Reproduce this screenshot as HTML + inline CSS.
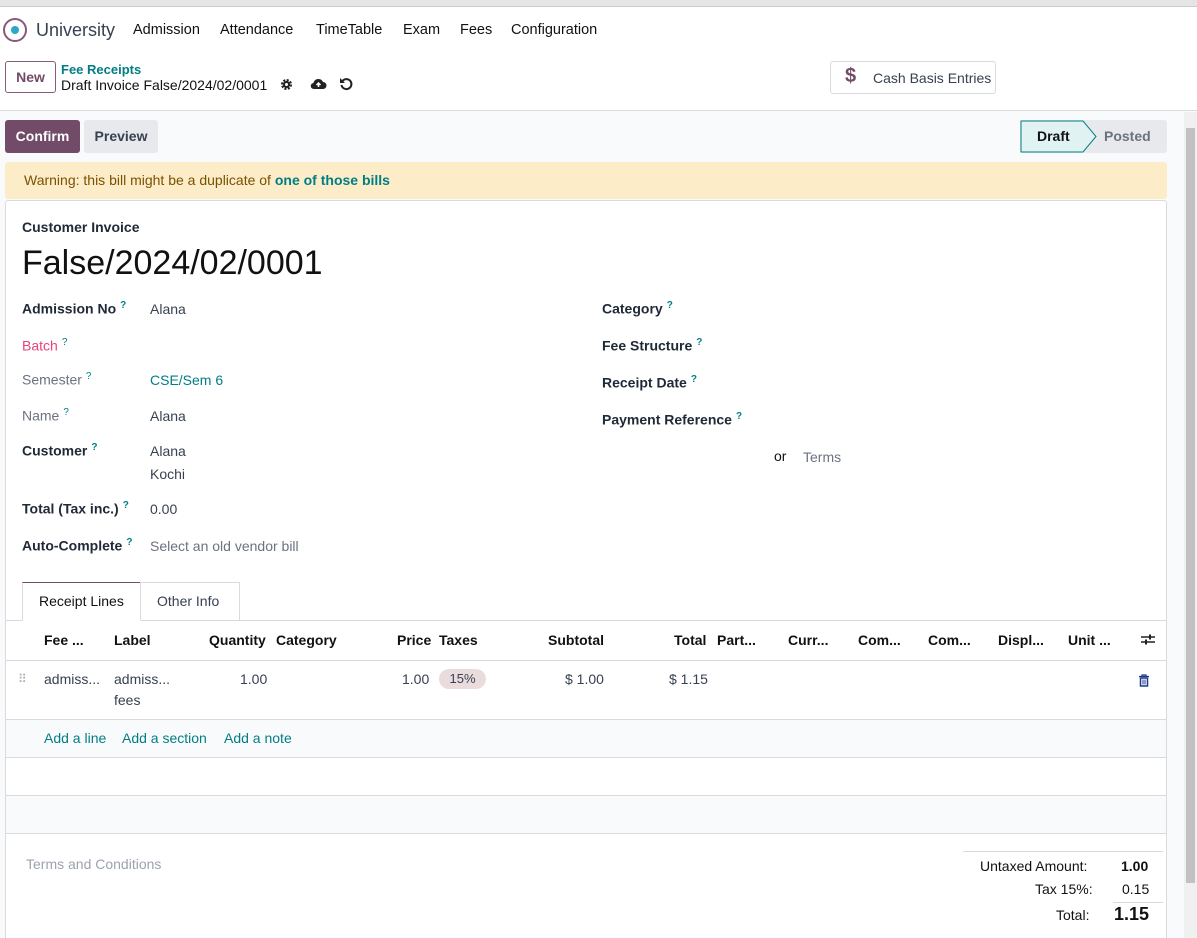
<!DOCTYPE html>
<html style="overflow:hidden;height:938px"><head><meta charset="utf-8"><style>
*{box-sizing:border-box;margin:0;padding:0}
body{width:1197px;height:938px;overflow:hidden;font-family:"Liberation Sans",sans-serif;font-size:14px;color:#374151;background:#f9fafb;position:relative}
.a{position:absolute;white-space:nowrap}
.teal{color:#017e84}
sup{color:#017e84;font-size:10px;margin-left:4px}
.lbl{font-weight:bold;color:#1f2937}
</style></head><body>
<div class="a" style="left:0;top:0;width:1197px;height:7px;background:#e5e5e5;border-bottom:1px solid #ccc"></div>
<div class="a" style="left:0;top:7px;width:1197px;height:104px;background:#fff;border-bottom:1px solid #d8dadd"></div>
<div class="a" style="left:3px;top:18px;width:24px;height:24px;border:2px solid #875a7b;border-radius:50%"><div style="margin:6px auto;width:8px;height:8px;border-radius:50%;background:#2aa7c9"></div></div>
<div class="a" style="left:36px;top:20px;font-size:18px;color:#374151">University</div>
<div class="a" style="left:133px;top:22px;font-size:14.5px;color:#111">Admission</div>
<div class="a" style="left:220px;top:22px;font-size:14.5px;color:#111">Attendance</div>
<div class="a" style="left:316px;top:22px;font-size:14.5px;color:#111">TimeTable</div>
<div class="a" style="left:403px;top:22px;font-size:14.5px;color:#111">Exam</div>
<div class="a" style="left:460px;top:22px;font-size:14.5px;color:#111">Fees</div>
<div class="a" style="left:511px;top:22px;font-size:14.5px;color:#111">Configuration</div>
<div class="a" style="left:5px;top:61px;width:51px;height:32px;border:1px solid #875a7b;border-radius:3px;color:#714b67;font-weight:bold;text-align:center;line-height:30px">New</div>
<div class="a teal" style="left:61px;top:62px;font-size:13px;font-weight:bold">Fee Receipts</div>
<div class="a" style="left:61px;top:77px;font-size:14px;color:#111">Draft Invoice False/2024/02/0001</div>
<svg class="a" style="left:280px;top:78px" width="13" height="13" viewBox="0 0 13 13"><circle cx="6.5" cy="6.5" r="4.2" fill="none" stroke="#222" stroke-width="2.6" stroke-dasharray="2 1.3"/><circle cx="6.5" cy="6.5" r="3.5" fill="#222"/><circle cx="6.5" cy="6.5" r="1.5" fill="#fff"/></svg>
<svg class="a" style="left:310px;top:77px" width="17" height="13" viewBox="0 0 17 13"><path d="M4 12H13A3.5 3.5 0 0 0 13 5A5 5 0 0 0 3.5 6A3 3 0 0 0 4 12Z" fill="#222"/><path d="M8.5 10V6M6.5 8L8.5 6L10.5 8" stroke="#fff" stroke-width="1.5" fill="none"/></svg>
<svg class="a" style="left:339px;top:77px" width="14" height="14" viewBox="0 0 14 14"><path d="M3.5 4A5 5 0 1 1 2.5 8" fill="none" stroke="#222" stroke-width="2"/><path d="M1 1V6H6Z" fill="#222"/></svg>
<div class="a" style="left:830px;top:61px;width:166px;height:33px;border:1px solid #d8dadd;border-radius:3px;background:#fff"><span style="position:absolute;left:14px;top:3px;font-size:20px;font-weight:bold;color:#714b67">$</span><span style="position:absolute;left:42px;top:8px;color:#374151">Cash Basis Entries</span></div>
<div class="a" style="left:5px;top:120px;width:75px;height:33px;background:#714b67;border-radius:3px;color:#fff;font-weight:bold;text-align:center;line-height:33px">Confirm</div>
<div class="a" style="left:84px;top:120px;width:74px;height:33px;background:#e7e9ed;border-radius:3px;color:#374151;font-weight:bold;text-align:center;line-height:33px">Preview</div>
<div class="a" style="left:1020px;top:120px;width:147px;height:33px;background:#e7e9ed;border-radius:3px"></div>
<svg class="a" style="left:1020px;top:120px" width="80" height="33"><path d="M1 1H63L76 16.5L63 32H1Z" fill="#e0f2f1" stroke="#017e84"/></svg>
<div class="a" style="left:1037px;top:128px;font-weight:bold;color:#111">Draft</div>
<div class="a" style="left:1104px;top:128px;font-weight:bold;color:#6b7280">Posted</div>
<div class="a" style="left:1184px;top:112px;width:13px;height:826px;background:#f0f0f0"></div>
<div class="a" style="left:1186px;top:128px;width:9px;height:755px;background:#c1c1c1"></div>
<div class="a" style="left:5px;top:162px;width:1162px;height:37px;background:#fdecc8;border-radius:3px"></div>
<div class="a" style="left:24px;top:172px;color:#7a5100">Warning: this bill might be a duplicate of <span class="teal" style="font-weight:bold">one of those bills</span></div>
<div class="a" style="left:5px;top:200px;width:1162px;height:738px;background:#fff;border:1px solid #d8dadd;border-bottom:none;border-radius:3px 3px 0 0"></div>
<div class="a lbl" style="left:22px;top:219px">Customer Invoice</div>
<div class="a" style="left:22px;top:244px;font-size:34px;color:#111">False/2024/02/0001</div>
<div class="a lbl" style="left:22px;top:300px">Admission No<sup>?</sup></div><div class="a" style="left:150px;top:301px">Alana</div>
<div class="a" style="left:22px;top:337px;color:#e9437a">Batch<sup>?</sup></div>
<div class="a" style="left:22px;top:371px;color:#6b7280">Semester<sup>?</sup></div><div class="a teal" style="left:150px;top:372px">CSE/Sem 6</div>
<div class="a" style="left:22px;top:407px;color:#6b7280">Name<sup>?</sup></div><div class="a" style="left:150px;top:408px">Alana</div>
<div class="a lbl" style="left:22px;top:442px">Customer<sup>?</sup></div><div class="a" style="left:150px;top:440px;line-height:23px">Alana<br>Kochi</div>
<div class="a lbl" style="left:22px;top:500px">Total (Tax inc.)<sup>?</sup></div><div class="a" style="left:150px;top:501px">0.00</div>
<div class="a lbl" style="left:22px;top:537px">Auto-Complete<sup>?</sup></div><div class="a" style="left:150px;top:538px;color:#6b7280">Select an old vendor bill</div>
<div class="a lbl" style="left:602px;top:300px">Category<sup>?</sup></div>
<div class="a lbl" style="left:602px;top:337px">Fee Structure<sup>?</sup></div>
<div class="a lbl" style="left:602px;top:374px">Receipt Date<sup>?</sup></div>
<div class="a lbl" style="left:602px;top:411px">Payment Reference<sup>?</sup></div>
<div class="a" style="left:774px;top:448px;color:#111">or</div><div class="a" style="left:803px;top:449px;color:#6b7280">Terms</div>
<div class="a" style="left:6px;top:620px;width:1160px;border-top:1px solid #d8dadd"></div>
<div class="a" style="left:22px;top:582px;width:119px;height:39px;background:#fff;border:1px solid #d8dadd;border-bottom:1px solid #fff;border-top:1px solid #714b67"></div>
<div class="a" style="left:39px;top:593px;color:#111">Receipt Lines</div>
<div class="a" style="left:140px;top:582px;width:100px;height:38px;border:1px solid #d8dadd;border-bottom:none"></div>
<div class="a" style="left:157px;top:593px;color:#374151">Other Info</div>
<div class="a" style="left:6px;top:660px;width:1160px;border-top:1px solid #d8dadd"></div>
<div class="a" style="left:6px;top:719px;width:1160px;height:114px;background:#f9fafb;border-top:1px solid #d8dadd"></div>
<div class="a" style="left:6px;top:757px;width:1160px;height:39px;background:#fff;border-top:1px solid #d8dadd;border-bottom:1px solid #d8dadd"></div>
<div class="a" style="left:6px;top:833px;width:1160px;border-top:1px solid #d8dadd"></div>
<div style="font-weight:bold;color:#111">
<div class="a" style="left:44px;top:632px">Fee ...</div><div class="a" style="left:114px;top:632px">Label</div>
<div class="a" style="left:209px;top:632px">Quantity</div><div class="a" style="left:276px;top:632px">Category</div>
<div class="a" style="left:397px;top:632px">Price</div><div class="a" style="left:439px;top:632px">Taxes</div>
<div class="a" style="left:548px;top:632px">Subtotal</div><div class="a" style="left:674px;top:632px">Total</div>
<div class="a" style="left:717px;top:632px">Part...</div><div class="a" style="left:788px;top:632px">Curr...</div>
<div class="a" style="left:858px;top:632px">Com...</div><div class="a" style="left:928px;top:632px">Com...</div>
<div class="a" style="left:998px;top:632px">Displ...</div><div class="a" style="left:1068px;top:632px">Unit ...</div>
</div>
<svg class="a" style="left:1141px;top:633px" width="14" height="13" viewBox="0 0 14 13"><path d="M0 4H14M0 9H14" stroke="#222" stroke-width="1.5"/><rect x="8" y="1.5" width="2" height="5" fill="#222"/><rect x="4" y="6.5" width="2" height="5" fill="#222"/></svg>
<div class="a" style="left:18px;top:672px;color:#aaa;font-size:12px">⠿</div>
<div class="a" style="left:44px;top:671px">admiss...</div><div class="a" style="left:114px;top:669px;line-height:21px">admiss...<br>fees</div>
<div class="a" style="left:240px;top:671px">1.00</div><div class="a" style="left:402px;top:671px">1.00</div>
<div class="a" style="left:439px;top:669px;width:47px;height:20px;background:#eadcdc;border-radius:10px;text-align:center;line-height:20px;font-size:13px">15%</div>
<div class="a" style="left:565px;top:671px">$ 1.00</div><div class="a" style="left:669px;top:671px">$ 1.15</div>
<svg class="a" style="left:1138px;top:674px" width="12" height="13" viewBox="0 0 12 13"><path d="M1 2.5H11M4 2.5V1H8V2.5" stroke="#1e3a8a" stroke-width="1.3" fill="none"/><path d="M2.5 4H9.5V12H2.5Z" fill="none" stroke="#1e3a8a" stroke-width="1.5"/><path d="M5 5.5V10.5M7 5.5V10.5" stroke="#1e3a8a"/></svg>
<div class="a teal" style="left:44px;top:730px">Add a line</div><div class="a teal" style="left:122px;top:730px">Add a section</div><div class="a teal" style="left:224px;top:730px">Add a note</div>
<div class="a" style="left:26px;top:856px;color:#9ca3af">Terms and Conditions</div>
<div class="a" style="left:963px;top:851px;width:200px;border-top:1px solid #d8dadd"></div>
<div class="a" style="left:980px;top:858px;color:#111">Untaxed Amount:</div><div class="a" style="left:1121px;top:858px;font-weight:bold;color:#111">1.00</div>
<div class="a" style="left:1035px;top:881px;color:#111">Tax 15%:</div><div class="a" style="left:1122px;top:881px;color:#111">0.15</div>
<div class="a" style="left:1113px;top:902px;width:50px;border-top:1px solid #d8dadd"></div>
<div class="a" style="left:1056px;top:907px;color:#111">Total:</div><div class="a" style="left:1114px;top:904px;font-weight:bold;font-size:18px;color:#111">1.15</div>
</body></html>
